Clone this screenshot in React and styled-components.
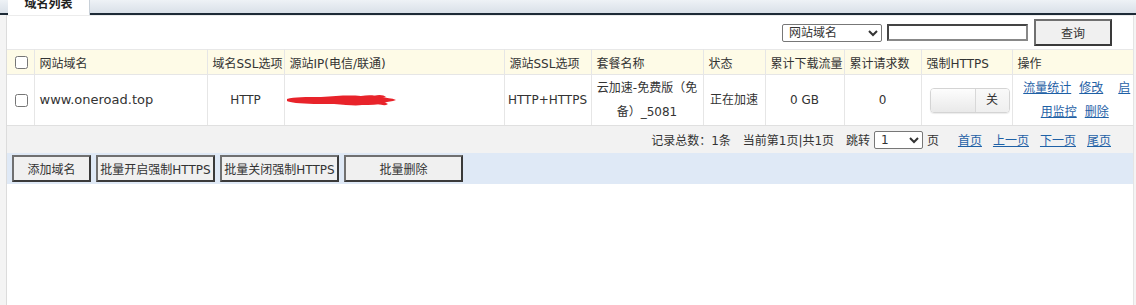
import styled, { createGlobalStyle } from "styled-components";

const GlobalStyle = createGlobalStyle`
  html, body {
    margin: 0;
    padding: 0;
    background: #f4f4f4;
    font-family: "DejaVu Sans", "Noto Sans CJK SC", sans-serif;
    font-size: 12px;
    color: #333;
  }
`

const Page = styled.div`
  display: flex;
  flex-direction: column;
  height: 305px;
  overflow: hidden;
`

const TabBar = styled.div`
  display: flex;
  align-items: flex-end;
  height: 13px;
  padding-left: 8px;
  background: linear-gradient(#eef2f6, #d9e0e8);
  border-bottom: 2px solid #1d2a36;
`

const Tab = styled.div`
  width: 81px;
  height: 15px;
  margin-bottom: -2px;
  background: #fff;
  border-right: 1px solid #c8d0d8;
  text-align: center;
  font-weight: bold;
  line-height: 8px;
  color: #222;
`

const Panel = styled.div`
  flex: 1;
  margin: 0 2px 0 6px;
  background: #fff;
  border-left: 1px solid #dcdcdc;
  border-right: 1px solid #e4e4e4;
`

const SearchRow = styled.div`
  display: flex;
  justify-content: flex-end;
  align-items: center;
  gap: 5px;
  height: 33px;
  padding-right: 21px;
  border-top: 1px solid #ececec;
`

const Select = styled.select`
  width: ${({ w }) => w}px;
  height: 18px;
  padding: 0 2px;
  border: 1px solid #777;
  border-radius: 2px;
  background: #fff;
  font-family: inherit;
  font-size: 12px;
  color: #333;
`

const SearchInput = styled.input`
  width: 137px;
  height: 13px;
  border: 2px solid #444;
  border-right-color: #888;
  border-bottom-color: #888;
  padding: 0;
`

const Button = styled.button`
  width: ${({ w }) => w || 119}px;
  height: 27px;
  margin-left: ${({ ml }) => ml || 0}px;
  padding: 0;
  background: #f0f0f0;
  border: 2px solid #3a3a3a;
  border-top-color: #707070;
  border-left-color: #707070;
  font-family: inherit;
  font-size: 12px;
  color: #333;
  white-space: nowrap;
`

const Table = styled.table`
  width: 100%;
  table-layout: fixed;
  border-collapse: collapse;
  border-top: 1px solid #e8e8e8;
`

const HeadRow = styled.tr`
  height: 25px;
  background: #fefbe7;
`

const Th = styled.th`
  padding: 0 0 0 5px;
  text-align: left;
  font-weight: normal;
  white-space: nowrap;
  overflow: hidden;
  border-right: 1px solid #e6e6e6;
  border-bottom: 1px solid #e6e6e6;
  &:last-child { border-right: none; }
`

const Td = styled.td`
  padding: 0 ${({ pad }) => (pad === undefined ? 5 : pad)}px;
  text-align: ${({ left }) => (left ? "left" : "center")};
  line-height: 24px;
  border-right: 1px solid #e6e6e6;
  border-bottom: 1px solid #e0e0e0;
  font-size: ${({ big }) => (big ? "13px" : "12px")};
  &:last-child { border-right: none; }
`

const DataRow = styled.tr`
  height: 51px;
`

const Check = styled.input.attrs({ type: "checkbox" })`
  margin: 0 0 0 3px;
  width: 13px;
  height: 13px;
  vertical-align: middle;
`

const Switch = styled.div`
  display: flex;
  width: 78px;
  height: 23px;
  margin: 0 auto;
  border: 1px solid #d4d4d4;
  border-radius: 4px;
  overflow: hidden;
  box-shadow: 0 1px 1px rgba(0, 0, 0, 0.08);
`

const Knob = styled.span`
  width: 44px;
  background: linear-gradient(#fdfdfd, #e9e9e9);
  border-right: 1px solid #d8d8d8;
`

const SwitchLabel = styled.span`
  flex: 1;
  background: linear-gradient(#f9f9f9, #efefef);
  line-height: 23px;
  text-align: center;
`

const Link = styled.a`
  color: #1f61a6;
  text-decoration: underline;
  cursor: pointer;
`

const OpLink = styled(Link)`
  margin: 0 ${({ gap }) => (gap === undefined ? 4 : gap)}px 0 4px;
`

const Ops = styled.div`
  text-align: center;
  line-height: 24px;
  padding-left: 4px;
`

const Pager = styled.div`
  display: flex;
  justify-content: flex-end;
  align-items: center;
  height: 27px;
  padding-right: 22px;
  background: #f2f2f2;
  white-space: pre;
`

const PagerText = styled.span`
  margin-right: ${({ mr }) => mr || 0}px;
`

const PagerLinks = styled.span`
  display: flex;
  gap: 11px;
  margin-left: 19px;
`

const ActionBar = styled.div`
  display: flex;
  align-items: center;
  gap: 5px;
  height: 31px;
  padding-left: 5px;
  background: #dfe9f6;
`

const cols = [27, 173, 77, 220, 87, 112, 62, 79, 77, 91, 121]
const heads = ["网站域名", "域名SSL选项", "源站IP(电信/联通)", "源站SSL选项", "套餐名称", "状态", "累计下载流量", "累计请求数", "强制HTTPS", "操作"]

const App = () => {
  return (
    <Page>
      <GlobalStyle />
      <TabBar>
        <Tab>域名列表</Tab>
      </TabBar>
      <Panel>
        <SearchRow>
          <Select w={100} defaultValue="domain">
            <option value="domain">网站域名</option>
          </Select>
          <SearchInput type="text" />
          <Button w={78} ml={1}>查询</Button>
        </SearchRow>
        <Table>
          <colgroup>
            {cols.map((w, i) => <col key={i} style={{ width: w }} />)}
          </colgroup>
          <thead>
            <HeadRow>
              <Th><Check /></Th>
              {heads.map((h) => <Th key={h}>{h}</Th>)}
            </HeadRow>
          </thead>
          <tbody>
            <DataRow>
              <Td left pad={5}><Check /></Td>
              <Td left big>www.oneroad.top</Td>
              <Td>HTTP</Td>
              <Td left pad={0}>
                {/* redaction brush stroke from the screenshot */}
                <svg width="112" height="14" viewBox="0 0 112 14" style={{ display: "block", marginLeft: 1 }}>
                  <path d="M1 6 C8 4 20 4 35 4 C50 3 62 2 75 3 C82 2 88 2 95 4 C100 5 106 5 110 7 C106 9 102 8 98 10 C92 12 84 12 76 12 C70 13 60 12 48 11 C35 11 20 11 10 10 C6 9 2 9 1 8 Z" fill="#e8232a" />
                  <path d="M88 3 C93 1 98 2 100 4 L96 5 Z M92 11 C96 12 99 13 102 11 L98 9 Z" fill="#e8232a" />
                </svg>
              </Td>
              <Td pad={2}>HTTP+HTTPS</Td>
              <Td pad={3}>云加速-免费版（免备）_5081</Td>
              <Td pad={2}>正在加速</Td>
              <Td>0 GB</Td>
              <Td>0</Td>
              <Td pad={8}>
                <Switch>
                  <Knob />
                  <SwitchLabel>关</SwitchLabel>
                </Switch>
              </Td>
              <Td pad={0}>
                <Ops>
                  <OpLink>流量统计</OpLink><OpLink gap={11}>修改</OpLink><OpLink>启用监控</OpLink><OpLink gap={0}>删除</OpLink>
                </Ops>
              </Td>
            </DataRow>
          </tbody>
        </Table>
        <Pager>
          <PagerText mr={12}>记录总数：1条</PagerText>
          <PagerText mr={12}>当前第1页|共1页</PagerText>
          <PagerText mr={4}>跳转</PagerText>
          <Select w={49} defaultValue="1">
            <option value="1">1</option>
          </Select>
          <PagerText> 页</PagerText>
          <PagerLinks>
            <Link>首页</Link>
            <Link>上一页</Link>
            <Link>下一页</Link>
            <Link>尾页</Link>
          </PagerLinks>
        </Pager>
        <ActionBar>
          <Button w={79}>添加域名</Button>
          <Button>批量开启强制HTTPS</Button>
          <Button>批量关闭强制HTTPS</Button>
          <Button>批量删除</Button>
        </ActionBar>
      </Panel>
    </Page>
  );
}

export default App;
